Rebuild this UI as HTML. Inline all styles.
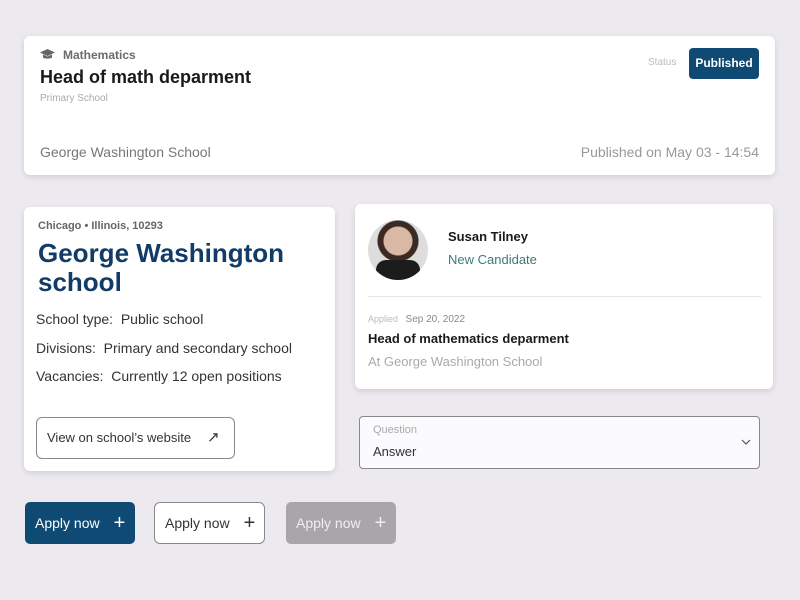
<!DOCTYPE html>
<html><head><style>
*{box-sizing:border-box;margin:0;padding:0}
body{width:800px;height:600px;background:#ece9ef;font-family:"Liberation Sans",sans-serif;position:relative;overflow:hidden}
.card{position:absolute;background:#fff;border-radius:6px;box-shadow:0 2px 6px rgba(0,0,0,.12)}
.a{position:absolute;white-space:nowrap}
.btn{position:absolute;top:502px;height:42px;border-radius:5px;font-size:14px;display:flex;align-items:center;padding-left:10px}
.btn span{margin-left:14px;font-size:20px;font-weight:300}
</style></head><body>
<div class="card" style="left:24px;top:36px;width:751px;height:139px">
  <svg class="a" style="left:16px;top:13px" width="15" height="12" viewBox="0 0 15 12"><path d="M7.5 0L0 3.5l7.5 3.5 7.5-3.5z" fill="#666"/><path d="M3 5.5v3c1.5 1.5 7.5 1.5 9 0v-3l-4.5 2z" fill="#666"/></svg>
  <div class="a" style="left:39px;top:12px;font-size:12px;font-weight:bold;color:#6b6b70">Mathematics</div>
  <div class="a" style="left:16px;top:31px;font-size:18px;font-weight:bold;color:#1a1a1a">Head of math deparment</div>
  <div class="a" style="left:16px;top:57px;font-size:10px;color:#aaa">Primary School</div>
  <div class="a" style="left:16px;top:108px;font-size:14px;color:#777">George Washington School</div>
  <div class="a" style="left:624px;top:21px;font-size:10px;color:#bbb">Status</div>
  <div class="a" style="left:665px;top:12px;width:70px;height:31px;background:#0e4a74;border-radius:4px;color:#fff;font-size:12px;font-weight:bold;text-align:center;line-height:31px">Published</div>
  <div class="a" style="right:16px;top:108px;font-size:14px;color:#999">Published on May 03 - 14:54</div>
</div>
<div class="card" style="left:24px;top:207px;width:311px;height:264px">
  <div class="a" style="left:14px;top:13px;font-size:11px;font-weight:bold;color:#666">Chicago • Illinois, 10293</div>
  <div class="a" style="left:14px;top:32px;font-size:26px;font-weight:bold;color:#123c66;line-height:29px">George Washington<br>school</div>
  <div class="a" style="left:12px;top:104px;font-size:14px;color:#333">School type:&nbsp; Public school</div>
  <div class="a" style="left:12px;top:133px;font-size:14px;color:#333">Divisions:&nbsp; Primary and secondary school</div>
  <div class="a" style="left:12px;top:161px;font-size:14px;color:#333">Vacancies:&nbsp; Currently 12 open positions</div>
  <div class="a" style="left:12px;top:210px;width:199px;height:42px;border:1px solid #888;border-radius:6px;font-size:13px;color:#333;padding:12px 0 0 10px">View on school’s website<span style="position:absolute;left:170px;top:10px;font-size:15px">↗</span></div>
</div>
<div class="card" style="left:355px;top:204px;width:418px;height:185px">
  <div class="a" style="left:13px;top:16px;width:60px;height:60px;border-radius:50%;background:radial-gradient(circle at 50% 35%,#d9b9a6 0 14px,#3a2a22 15px 20px,#ddd 21px);overflow:hidden"><div style="position:absolute;left:8px;top:40px;width:44px;height:22px;background:#1c1c1c;border-radius:10px 10px 0 0"></div></div>
  <div class="a" style="left:93px;top:25px;font-size:13px;font-weight:bold;color:#1a1a1a">Susan Tilney</div>
  <div class="a" style="left:93px;top:48px;font-size:13px;color:#3d7a7a">New Candidate</div>
  <div class="a" style="left:13px;top:92px;width:393px;height:1px;background:#e5e5e5"></div>
  <div class="a" style="left:13px;top:110px;font-size:9px;color:#bbb">Applied &nbsp;&nbsp;<span style="color:#888;font-size:10px">Sep 20, 2022</span></div>
  <div class="a" style="left:13px;top:127px;font-size:13px;font-weight:bold;color:#1a1a1a">Head of mathematics deparment</div>
  <div class="a" style="left:13px;top:150px;font-size:13px;color:#aaa">At George Washington School</div>
</div>
<div class="a" style="left:359px;top:416px;width:401px;height:53px;border:1px solid #888;border-radius:4px;background:#fbfafc">
  <div class="a" style="left:13px;top:7px;font-size:11px;color:#aaa">Question</div>
  <div class="a" style="left:13px;top:27px;font-size:13px;color:#333">Answer</div>
  <svg class="a" style="left:381px;top:22px" width="10" height="7" viewBox="0 0 10 7"><path d="M1 1l4 4 4-4" fill="none" stroke="#555" stroke-width="1.2"/></svg>
</div>
<div class="btn" style="left:25px;width:110px;background:#0e4a74;color:#fff">Apply now<span>+</span></div>
<div class="btn" style="left:154px;width:111px;background:#fff;border:1px solid #888;color:#333;border-radius:6px">Apply now<span>+</span></div>
<div class="btn" style="left:286px;width:110px;background:#a9a6ab;color:#eee">Apply now<span>+</span></div>
</body></html>
